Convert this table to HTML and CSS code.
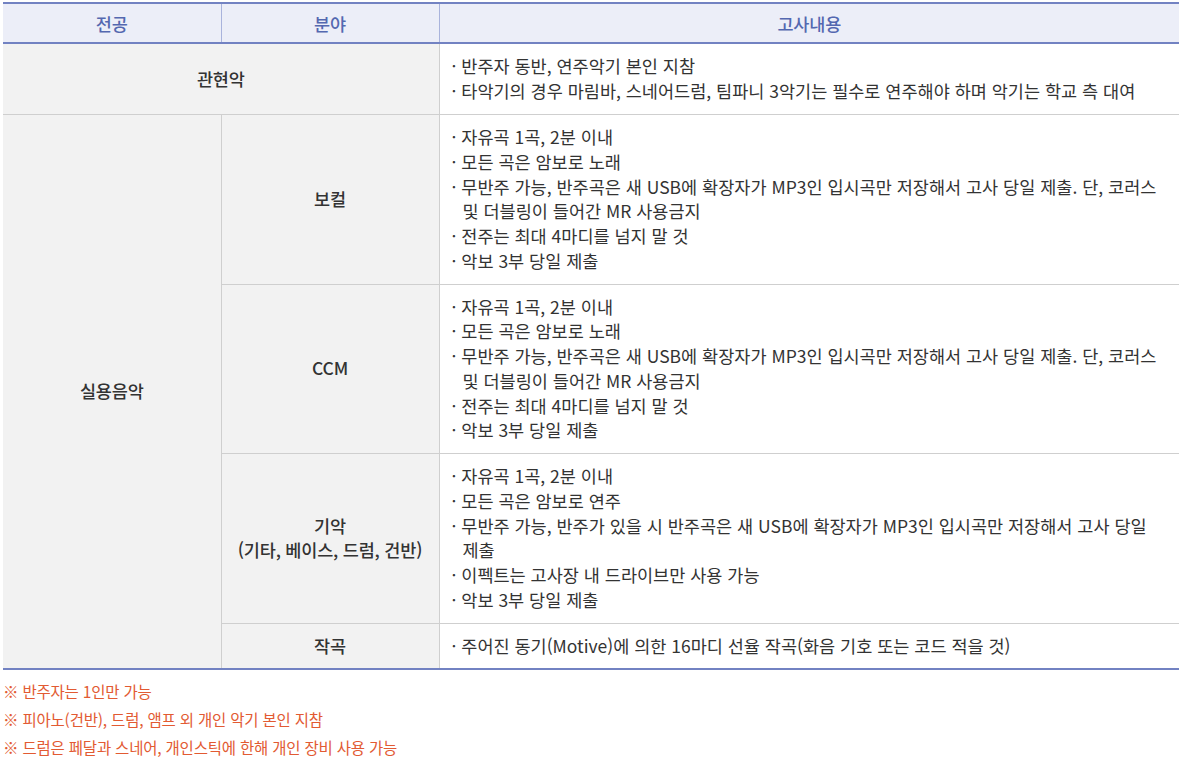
FILE: index.html
```html
<!DOCTYPE html>
<html lang="ko">
<head>
<meta charset="utf-8">
<link rel="stylesheet" href="styles.css">
</head>
<body>
<div class="wrap">
<table class="exam">
  <colgroup>
    <col class="c1"><col class="c2"><col class="c3">
  </colgroup>
  <thead>
    <tr><th>전공</th><th>분야</th><th>고사내용</th></tr>
  </thead>
  <tbody>
    <tr>
      <td class="label first" colspan="2">관현악</td>
      <td class="content first">
        <p>· 반주자 동반, 연주악기 본인 지참</p>
        <p>· 타악기의 경우 마림바, 스네어드럼, 팀파니 3악기는 필수로 연주해야 하며 악기는 학교 측 대여</p>
      </td>
    </tr>
    <tr>
      <td class="label major" rowspan="4">실용음악</td>
      <td class="label">보컬</td>
      <td class="content">
        <p>· 자유곡 1곡, 2분 이내</p>
        <p>· 모든 곡은 암보로 노래</p>
        <p>· 무반주 가능, 반주곡은 새 USB에 확장자가 MP3인 입시곡만 저장해서 고사 당일 제출. 단, 코러스 및 더블링이 들어간 MR 사용금지</p>
        <p>· 전주는 최대 4마디를 넘지 말 것</p>
        <p>· 악보 3부 당일 제출</p>
      </td>
    </tr>
    <tr>
      <td class="label">CCM</td>
      <td class="content">
        <p>· 자유곡 1곡, 2분 이내</p>
        <p>· 모든 곡은 암보로 노래</p>
        <p>· 무반주 가능, 반주곡은 새 USB에 확장자가 MP3인 입시곡만 저장해서 고사 당일 제출. 단, 코러스 및 더블링이 들어간 MR 사용금지</p>
        <p>· 전주는 최대 4마디를 넘지 말 것</p>
        <p>· 악보 3부 당일 제출</p>
      </td>
    </tr>
    <tr>
      <td class="label">기악<br>(기타, 베이스, 드럼, 건반)</td>
      <td class="content">
        <p>· 자유곡 1곡, 2분 이내</p>
        <p>· 모든 곡은 암보로 연주</p>
        <p>· 무반주 가능, 반주가 있을 시 반주곡은 새 USB에 확장자가 MP3인 입시곡만 저장해서 고사 당일 제출</p>
        <p>· 이펙트는 고사장 내 드라이브만 사용 가능</p>
        <p>· 악보 3부 당일 제출</p>
      </td>
    </tr>
    <tr>
      <td class="label">작곡</td>
      <td class="content">
        <p>· 주어진 동기(Motive)에 의한 16마디 선율 작곡(화음 기호 또는 코드 적을 것)</p>
      </td>
    </tr>
  </tbody>
</table>
<ul class="notes">
  <li>※ 반주자는 1인만 가능</li>
  <li>※ 피아노(건반), 드럼, 앰프 외 개인 악기 본인 지참</li>
  <li>※ 드럼은 페달과 스네어, 개인스틱에 한해 개인 장비 사용 가능</li>
</ul>
</div>
</body>
</html>
```

FILE: styles.css
```css
html, body {
  margin: 0;
  padding: 0;
  background: #fff;
}
body {
  font-family: "Noto Sans CJK KR", "Noto Sans", sans-serif;
  color: #333;
}
.wrap {
  padding: 2px 3px 0 3px;
}
.exam {
  width: 1176px;
  border-collapse: collapse;
  table-layout: fixed;
  border-top: 2px solid #7282c2;
  border-bottom: 2px solid #7282c2;
}
.c1 { width: 218px; }
.c2 { width: 218px; }
.c3 { width: 740px; }
.exam th {
  height: 38px;
  padding: 0;
  background: #eceef8;
  color: #5468b0;
  font-size: 17.5px;
  font-weight: 500;
  text-align: center;
  border-left: 1px solid #a9b3dc;
  border-bottom: 2px solid #7282c2;
  letter-spacing: -0.2px;
}
.exam th:first-child { border-left: none; }
.exam td {
  border: 1px solid #cfcfcf;
  padding: 0;
}
.exam tr td:first-child { border-left: none; }
.exam tr td:last-child { border-right: none; }
.exam tbody tr:first-child td { border-top: none; }
.exam tbody tr:last-child td { border-bottom: none; }
.exam td.major { border-bottom: none; }
.label {
  background: #f2f2f2;
  text-align: center;
  vertical-align: middle;
  font-size: 17.5px;
  font-weight: 500;
  line-height: 24.75px;
  color: #333;
  letter-spacing: -0.2px;
}
.exam td.content {
  background: #fff;
  padding: 10px 22px 10px 12px;
  font-size: 17.5px;
  line-height: 24.75px;
  letter-spacing: 0;
  color: #333;
  font-weight: 400;
}
.exam td.content.first {
  padding-top: 10.3px;
  padding-bottom: 10.3px;
}
.content p {
  margin: 0;
  padding-left: 11px;
  text-indent: -11px;
}
.notes {
  list-style: none;
  margin: 8px 0 0 0;
  padding: 0;
  color: #e25a32;
  font-size: 15.5px;
  line-height: 27.6px;
  letter-spacing: -0.2px;
}
```
